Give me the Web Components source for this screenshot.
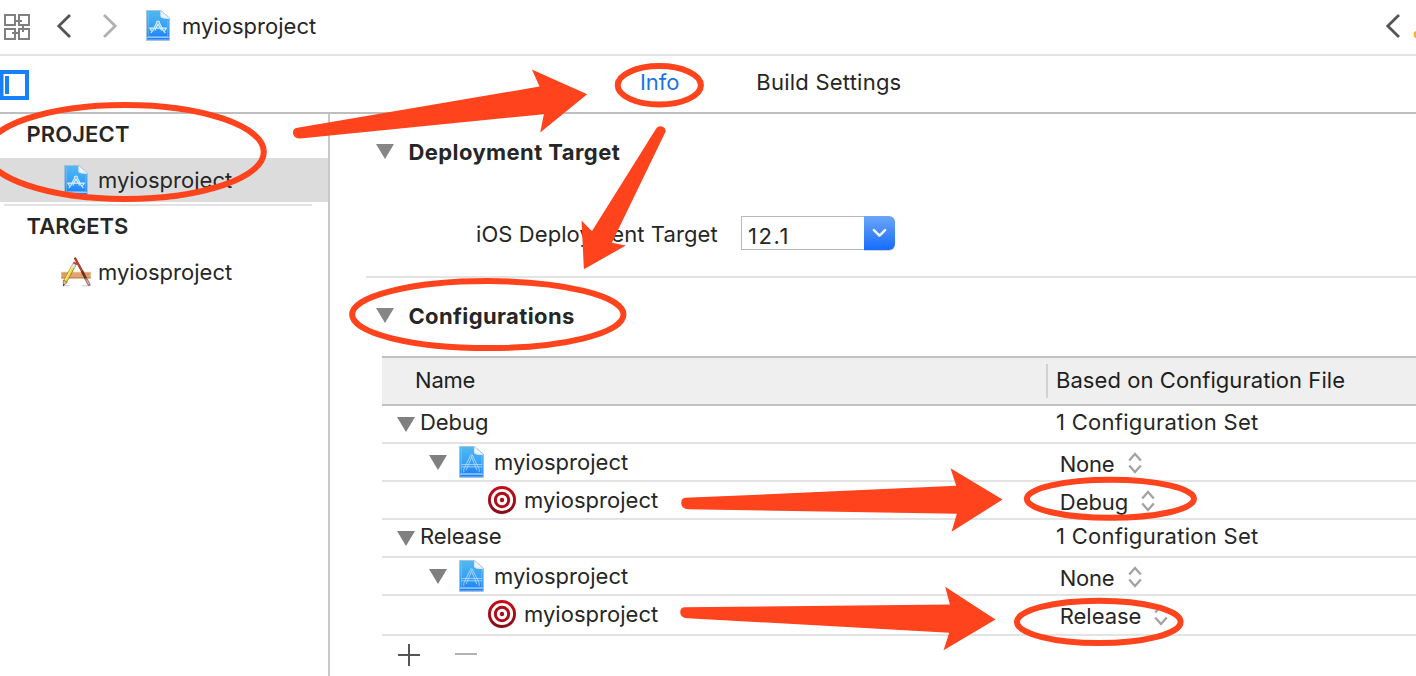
<!DOCTYPE html>
<html lang="en">
<head>
<meta charset="utf-8">
<title>myiosproject</title>
<style>
html, body { margin: 0; padding: 0; background: #fff; }
body { width: 1416px; height: 676px; overflow: hidden; font-family: Inter, "Liberation Sans", sans-serif; font-size: 22px; line-height: 28px; color: #262626; }
</style>
</head>
<body>
<project-editor></project-editor>
<script>
const define = (name, html, Base = class extends HTMLElement {}) => {
  const t = document.createElement('template');
  t.innerHTML = html;
  customElements.define(name, class extends Base {
    constructor() {
      super();
      this.attachShadow({ mode: 'open' }).append(t.content.cloneNode(true));
    }
  });
};

/* A label whose tracking is set so that its ink spans the "ink" width. */
const ctx = document.createElement('canvas').getContext('2d');
define('ui-label', `<style>
  :host { display: block; white-space: pre; height: 28px; flex: none; }
</style><slot></slot>`, class extends HTMLElement {
  connectedCallback() {
    const text = this.textContent;
    const weight = this.getAttribute('weight') || '400';
    const size = this.getAttribute('size') || '22';
    ctx.font = weight + ' ' + size + 'px Inter, "Liberation Sans", sans-serif';
    const m = ctx.measureText(text);
    const natural = m.actualBoundingBoxRight + m.actualBoundingBoxLeft;
    const ink = parseFloat(this.getAttribute('ink'));
    this.style.fontWeight = weight;
    this.style.fontSize = size + 'px';
    this.style.letterSpacing = ((ink - natural) / (text.length - 1)).toFixed(3) + 'px';
    this.style.width = ink + 'px';
    this.style.textIndent = m.actualBoundingBoxLeft.toFixed(2) + 'px';
  }
});

/* Blueprint document; the variant with a larger glyph is for table rows. */
const doc = (w, h, glyph) => `<style>:host{display:block;flex:none;width:${w}px;height:${h}px}svg{display:block}</style>
<svg width="${w}" height="${h}" viewBox="0 0 24 31" preserveAspectRatio="none">
<defs><linearGradient id="g" x1="0" y1="0" x2="0" y2="1"><stop offset="0" stop-color="#4fb9f2"/><stop offset=".5" stop-color="#3aa2f6"/><stop offset="1" stop-color="#1a7dfb"/></linearGradient></defs>
<path d="M.5 .5H15L23.5 8V30.5H.5z" fill="#fff" stroke="#8fb4d2" stroke-width=".8"/>
<path d="M1 1H14.5V6.5Q15 8 17 8.3L23 9V29.8H1z" fill="url(#g)"/>
<path d="M2.4 2.5V26.6H21.8V10" fill="none" stroke="#8fd0fb" stroke-width=".7" opacity=".65"/>
<path d="M1 27.3H23" stroke="#d6eeff" stroke-width=".8"/>
<path d="M14.8 .8V5.5Q15.3 7.7 17.5 7.8L23.2 8.3z" fill="#eef5fa" stroke="#b7ccdc" stroke-width=".5"/>
${glyph}</svg>`;
define('doc-icon', doc(24, 31, `<g fill="none" stroke="#d9f1ff" stroke-width="1.2" stroke-linecap="round"><path d="M11 12.2L6.8 20.5L5.2 22.6M13 12.2L17.2 20.5L19 22.7M10.6 11.6Q12 10.4 13.4 11.6M3.8 18.2H9.2M10.5 18.2H20.3M4 18.4L5.3 20.4M20.2 18.4L18.8 20.3M12 14L9 20M12 14L15.4 20"/></g>`));
define('doc-icon-large', doc(25, 32, `<g fill="none" stroke="#b4defd" stroke-width=".8" stroke-linecap="round"><path d="M11 9.3L4.6 22.5V25M13 9.3L19.4 22.5V25M12.2 10.5L7 23M12 10.5L17 23M10.8 9Q12 7.8 13.2 9M2.6 18H21.6M2.6 20.2H21.6"/></g>`));

define('app-icon', `<style>:host{display:block;flex:none;width:32px;height:30px}svg{display:block}</style>
<svg width="32" height="30" viewBox="0 0 32 30">
<path d="M3 28.7H10M22 28.7H31" stroke="#b5b5b5" stroke-width="1" opacity=".65"/>
<rect x="1.2" y="15" width="29.6" height="6.2" fill="#dfa673"/><path d="M1.2 15.3H30.8" stroke="#efbd88"/><path d="M1.2 20.9H30.8" stroke="#b77848"/>
<path d="M4 15.5v3M7 15.5v2M10 15.5v3M22 15.5v3M25 15.5v2M28 15.5v3" stroke="#b98257" stroke-width=".8"/>
<path d="M15.2 1.5L22 14" stroke="#8f2d1a" stroke-width="2.4" stroke-linecap="round"/>
<path d="M15.6 2L22 14" stroke="#cb5940" stroke-width=".9" stroke-linecap="round"/>
<path d="M22 14L26.3 22.5" stroke="#6d2d20" stroke-width="2.7"/>
<path d="M26.3 22.5L29 27.5" stroke="#b0786b" stroke-width="3" stroke-linecap="round"/><path d="M26.7 23L28.8 27" stroke="#e3bcae" stroke-width="1"/>
<path d="M15.1 6.2L5.2 24.2" stroke="#7d7038" stroke-width="4"/>
<path d="M13 9.8L5.3 24" stroke="#f3d630" stroke-width="3"/><path d="M12.4 9.8L4.8 23.5" stroke="#fff18a" stroke-width="1"/>
<path d="M14.7 7L12.6 10.6" stroke="#dbe4ef" stroke-width="3.4"/><path d="M15.6 5.4L14.6 7.1" stroke="#df3b35" stroke-width="3.8"/>
<path d="M3.3 23.2L7.3 25.2L3.3 28.8z" fill="#e3bc8b" stroke="#6a5440" stroke-width=".6"/><path d="M3.2 26.8L4.8 27.5L3.2 29z" fill="#333"/>
</svg>`);

define('target-icon', `<style>:host{display:block;flex:none;width:30px;height:30px}svg{display:block}</style>
<svg width="30" height="30" viewBox="0 0 30 30"><defs><linearGradient id="r" x1="0" y1="0" x2="0" y2="1"><stop offset="0" stop-color="#cb0b18"/><stop offset="1" stop-color="#850d16"/></linearGradient></defs>
<circle cx="15" cy="15.4" r="14" fill="#bbb" opacity=".5"/><circle cx="15" cy="15" r="14" fill="url(#r)"/><circle cx="15" cy="15" r="11.1" fill="#fff"/><circle cx="15" cy="15" r="8.2" fill="#b00d18"/><circle cx="15" cy="15" r="5.2" fill="#fff"/><circle cx="15" cy="15" r="2.2" fill="#aa0d18"/></svg>`);

define('disclosure-icon', `<style>:host{display:block;flex:none;width:18px;height:15px}svg{display:block}</style>
<svg width="18" height="15"><path d="M0 0H18L9 15z" fill="var(--tri,#868686)"/></svg>`);

define('stepper-icon', `<style>:host{display:block;flex:none;width:14px;height:22px}svg{display:block}</style>
<svg width="14" height="22" fill="none" stroke="#a2a2a2" stroke-width="2.3"><path d="M1.2 8.4L7 2L12.8 8.4M1.2 13.6L7 20L12.8 13.6"/></svg>`);

define('combo-box', `<style>
:host{display:grid;grid-template:34px / 123px 31px;width:154px;height:34px}
.f{box-sizing:border-box;height:34px;border:1px solid #b8b8b8;border-right:0;padding:5px 0 0 7px;background:#fff}
.b{border-radius:0 6px 6px 0;background:linear-gradient(#6ca6f8,#156cfe);box-shadow:0 1px 1px rgba(0,0,0,.18)}
svg{display:block}
</style><div class="f"><slot></slot></div><div class="b"><svg width="31" height="34"><path d="M9.8 14L15.5 19.7L21.2 14" fill="none" stroke="#fff" stroke-width="2.4" stroke-linecap="round" stroke-linejoin="round"/></svg></div>`);

define('path-bar', `<style>
:host{display:flex;box-sizing:border-box;height:56px;border-bottom:2px solid #e3e3e3;background:#fff}
svg{display:block;flex:none}
.l{display:flex;flex:1}
doc-icon{margin:10px 0 0 18px}
ui-label{margin:11.5px 0 0 13px}
</style><div class="l">
<svg width="128" height="54" fill="none"><g stroke="#808080" stroke-width="2"><path d="M5 15h10v10H5zM19 15h10v10H19zM5 29h10v10H5zM19 29h10v10H19z"/><path d="M16 21h6M23 26v6M12 33h6"/></g>
<path d="M70 15L58.8 26L70 37" stroke="#555" stroke-width="2.8"/><path d="M104 15L115.2 26L104 37" stroke="#b1b1b1" stroke-width="2.8"/></svg>
<doc-icon></doc-icon><ui-label ink="133">myiosproject</ui-label></div>
<svg width="36" height="54" fill="none"><path d="M19 15L7.8 26L19 37" stroke="#555" stroke-width="2.8"/><ellipse cx="36.8" cy="34.5" rx="3.2" ry="3.6" fill="#f5b335"/></svg>`);

define('tab-bar', `<style>
:host{display:flex;box-sizing:border-box;height:58px;border-bottom:2px solid #bebebe}
svg{display:block;flex:none;margin-top:14px}
.i{color:#1a73e8;margin:12px 0 0 612px}.s{margin:12px 0 0 78px}
</style><svg width="29" height="30"><path d="M1.5 2H27V28H1.5z" fill="#fff" stroke="#1680fb" stroke-width="4"/><path d="M0 0H3V30H0z" fill="#1680fb"/><path d="M5 6H9V24H5z" fill="#1680fb"/></svg>
<ui-label class="i" ink="38.3">Info</ui-label><ui-label class="s" ink="143.3">Build Settings</ui-label>`);

define('side-bar', `<style>
:host{display:block;box-sizing:border-box;width:330px;border-right:2px solid #c8c8c8}
.h{padding:6px 0 10px 27px}.r{display:flex;height:44px}
.sel{background:#dcdcdc;box-sizing:border-box;padding:7px 0 0 64px}.sel ui-label{margin:1px 0 0 11px}
hr{border:0;height:2px;background:#e3e3e3;margin:2px 16px 0 4px}
.t{padding-left:60px}.t app-icon{margin-top:7px}.t ui-label{margin:8px 0 0 7px}
</style><div class="h"><ui-label weight="600" ink="101.5" style="margin-left:.4px">PROJECT</ui-label></div>
<div class="r sel"><doc-icon></doc-icon><ui-label ink="133">myiosproject</ui-label></div><hr>
<div class="h"><ui-label weight="600" ink="101.5" style="margin-left:-.4px">TARGETS</ui-label></div>
<div class="r t"><app-icon></app-icon><ui-label ink="133">myiosproject</ui-label></div>`);

define('config-row', `<style>
:host{display:grid;grid-template-columns:674.5px 1fr;height:36px;border-bottom:2px solid #e3e3e3}
:host([last]){height:38px}
.n,.v{display:flex;min-width:0}
</style><div class="n"><slot name="name"></slot></div><div class="v"><slot></slot></div>`);

const group = (name, ink) => `<config-row><disclosure-icon slot="name" style="margin:11px 6px 0 15px;--tri:#808080"></disclosure-icon><ui-label slot="name" ink="${ink}" style="margin-top:2px">${name}</ui-label><ui-label ink="201" style="margin:2px 0 0 .5px">1 Configuration Set</ui-label></config-row>
<config-row><disclosure-icon slot="name" style="margin:11px 12px 0 47px;--tri:#808080"></disclosure-icon><doc-icon-large slot="name" style="margin-top:2px"></doc-icon-large><ui-label slot="name" ink="133" style="margin:4px 0 0 11px">myiosproject</ui-label><ui-label ink="53" style="margin:6px 14px 0 4.3px">None</ui-label><stepper-icon style="margin-top:8px"></stepper-icon></config-row>
<config-row ${name === 'Release' ? 'last' : ''}><target-icon slot="name" style="margin:3px 8px 0 105px"></target-icon><ui-label slot="name" ink="133" style="margin-top:4px">myiosproject</ui-label><ui-label ink="${ink}" style="margin:6px 14px 0 4.3px">${name}</ui-label><stepper-icon style="margin-top:8px"></stepper-icon></config-row>`;

define('config-table', `<style>
:host{display:block;margin-left:52px}
header{display:grid;grid-template-columns:664px 1fr;box-sizing:border-box;height:50px;border-top:2px solid #c0c0c0;border-bottom:2px solid #c0c0c0;background:#efefef;color:#1e1e1e}
.a{padding:8px 0 0 34px}.b{border-left:2px solid #d2d2d2;height:28px;margin-top:6px;padding:2px 0 4px 9px}
footer svg{display:block}
</style><header><div class="a"><ui-label ink="58.6">Name</ui-label></div><div class="b"><ui-label ink="287.2">Based on Configuration File</ui-label></div></header>
${group('Debug', 66)}${group('Release', 79.7)}
<footer><svg width="110" height="40"><path d="M16 19H38M27 8V30" stroke="#555" stroke-width="2"/><path d="M73 18H95" stroke="#b2b2b2" stroke-width="2"/></svg></footer>`);

define('info-pane', `<style>
:host{display:block;min-width:0}
.h{display:flex}.h disclosure-icon{margin:6px 15px 0 46px}
.h ui-label{margin-left:.4px}
.d{padding-top:24px}
.f{display:flex;padding:50px 0 0 147px;height:34px}
.f > ui-label{margin-top:4px}.f combo-box{margin-left:23.6px}
hr{border:0;height:2px;background:#e3e3e3;margin:26px 0 0 36px}
.c{padding:24px 0 26px}
</style><div class="h d"><disclosure-icon></disclosure-icon><ui-label weight="700" ink="210.3">Deployment Target</ui-label></div>
<div class="f"><ui-label ink="240.4">iOS Deployment Target</ui-label><combo-box><ui-label ink="37.5">12.1</ui-label></combo-box></div>
<hr><div class="h c"><disclosure-icon></disclosure-icon><ui-label weight="700" ink="164.6">Configurations</ui-label></div>
<config-table></config-table>`);

define('callout-layer', `<style>:host{position:absolute;left:0;top:0;width:1416px;height:676px;pointer-events:none}svg{display:block}</style>
<svg width="1416" height="676"><g fill="none" stroke="#ff431d" stroke-width="6">
<ellipse cx="125" cy="151.9" rx="138.8" ry="47"/><ellipse cx="659.3" cy="85.3" rx="41.6" ry="19.2"/><ellipse cx="487.8" cy="314.6" rx="135.7" ry="33.5"/><ellipse cx="1110.4" cy="498.8" rx="83.6" ry="19"/><ellipse cx="1098.8" cy="621.9" rx="81.8" ry="21.2"/></g>
<g fill="#ff431d">
<path transform="translate(280.2 50.2) scale(.33333)" d="M52 233L778 109L755 58L921 132L780 247L791 192L60 265Q39 265 38 247Q38 235 52 233z"/>
<path transform="translate(280.2 50.2) scale(.33333)" d="M1128 235Q1136 225 1148 230Q1158 236 1156 245L995 578L1037 586L911 657L904 511L935 543z"/>
<path transform="translate(660.2 450.2) scale(.33333)" d="M75 143L888 107L871 54L1027 148L874 245L890 191L82 177Q63 175 63 158Q63 144 75 143z"/>
<path transform="translate(660.2 450.2) scale(.33333)" d="M72 471L869 463L855 410L1006 508L850 600L867 548L82 504Q60 502 60 486Q60 472 72 471z"/>
</g></svg>`);

define('project-editor', `<style>
:host{display:flex;flex-direction:column;position:relative;width:1416px;height:676px;overflow:hidden;background:#fff}
main{display:grid;grid-template-columns:330px 1fr;flex:1;min-height:0}
path-bar,tab-bar{flex:none}
</style><path-bar></path-bar><tab-bar></tab-bar><main><side-bar></side-bar><info-pane></info-pane></main><callout-layer></callout-layer>`);
</script>
</body>
</html>
